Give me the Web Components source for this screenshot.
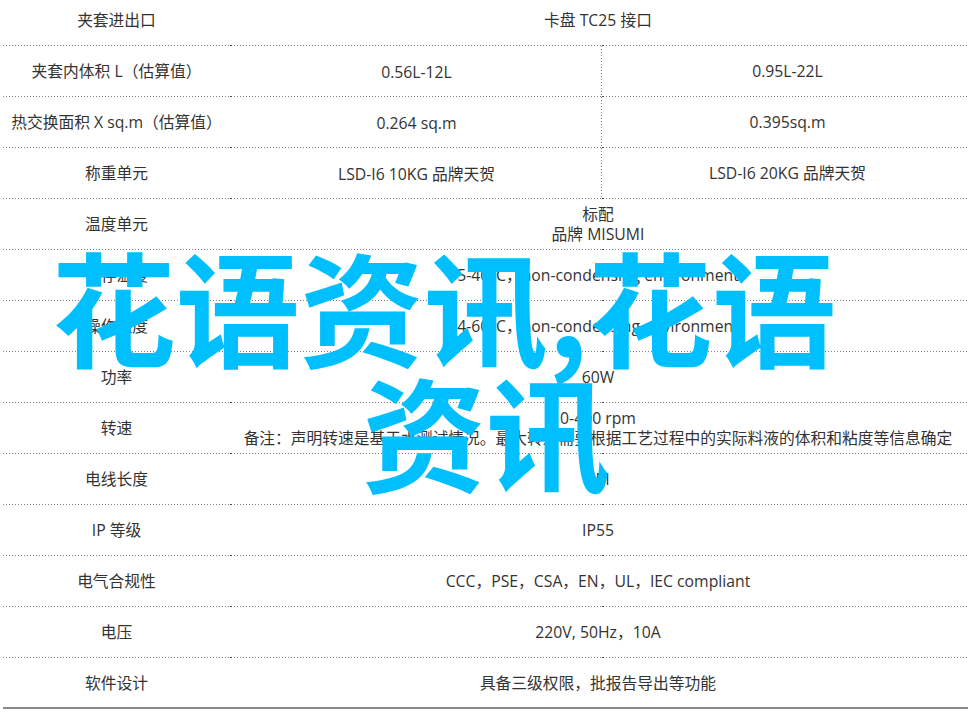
<!DOCTYPE html>
<html lang="zh">
<head>
<meta charset="utf-8">
<title>规格</title>
<style>
html,body{margin:0;padding:0;background:#fff;}
body{width:971px;height:716px;overflow:hidden;font-family:"Open Sans","Noto Sans CJK SC",sans-serif;color:#333;}
</style>
</head>
<body>
<spec-page>
  <spec-row first><span>夹套进出口</span><span slot="wide">卡盘 TC25 接口</span></spec-row>
  <spec-row split><span>夹套内体积 L（估算值）</span><span slot="a">0.56L-12L</span><span slot="b">0.95L-22L</span></spec-row>
  <spec-row split><span>热交换面积 X sq.m（估算值）</span><span slot="a">0.264 sq.m</span><span slot="b">0.395sq.m</span></spec-row>
  <spec-row split><span>称重单元</span><span slot="a">LSD-I6 10KG 品牌天贺</span><span slot="b">LSD-I6 20KG 品牌天贺</span></spec-row>
  <spec-row><span>温度单元</span><span slot="wide">标配<br>品牌 MISUMI</span></spec-row>
  <spec-row><span>储存温度</span><span slot="wide">5-40°C，non-condensing environment</span></spec-row>
  <spec-row><span>操作温度</span><span slot="wide">4-60°C，non-condensing environment</span></spec-row>
  <spec-row><span>功率</span><span slot="wide">60W</span></spec-row>
  <spec-row><span>转速</span><span slot="wide">0-400 rpm<br>备注：声明转速是基于水测试情况。最大转速需要根据工艺过程中的实际料液的体积和粘度等信息确定</span></spec-row>
  <spec-row><span>电线长度</span><span slot="wide">1M</span></spec-row>
  <spec-row><span>IP 等级</span><span slot="wide">IP55</span></spec-row>
  <spec-row><span>电气合规性</span><span slot="wide">CCC，PSE，CSA，EN，UL，IEC compliant</span></spec-row>
  <spec-row><span>电压</span><span slot="wide">220V, 50Hz，10A</span></spec-row>
  <spec-row last><span>软件设计</span><span slot="wide">具备三级权限，批报告导出等功能</span></spec-row>
  <title-overlay slot="overlay">花语资讯,花语资讯</title-overlay>
</spec-page>
<script>
class SpecPage extends HTMLElement{
  constructor(){super();
    this.attachShadow({mode:'open'}).innerHTML=`<style>
      :host{display:block;position:relative;width:971px;height:716px;overflow:hidden;box-sizing:border-box;padding:0 3px;}
      .rows{display:flex;flex-direction:column;margin-top:-5px;}
    </style><div class="rows"><slot></slot></div><slot name="overlay"></slot>`;
  }
}
class SpecRow extends HTMLElement{
  constructor(){super();
    this.attachShadow({mode:'open'}).innerHTML=`<style>
      :host{display:grid;grid-template-columns:227px 372px 366px;height:51px;box-sizing:border-box;padding:0 0 1px;font-size:15.75px;line-height:20px;text-align:center;
        background:
          linear-gradient(#444,#444) 227px 100%/2px 1px no-repeat,
          linear-gradient(#444,#444) 599px 100%/2px 1px no-repeat,
          repeating-linear-gradient(90deg,#808080 0 1px,transparent 1px 3px) 0 100%/100% 1px no-repeat;}
      :host([last]){background:linear-gradient(#8a8a8a,#8a8a8a) 0 100%/100% 2px no-repeat;}
      .c{display:flex;align-items:center;justify-content:center;min-width:0;white-space:nowrap;}
      .wide{grid-column:2 / 4;padding-right:2px;}
      .a,.b{display:none;}
      :host([split]) .wide{display:none;}
      :host([split]) .a,:host([split]) .b{display:flex;}
      :host([split]) .a{margin-bottom:-1px;padding-left:1px;background:repeating-linear-gradient(180deg,#808080 0 1px,transparent 1px 3px) 100% 0/1px 100% no-repeat;}
      :host([split]) .b{padding-left:5px;}
    </style>
    <div class="c"><slot></slot></div>
    <div class="c wide"><div><slot name="wide"></slot></div></div>
    <div class="c a"><slot name="a"></slot></div>
    <div class="c b"><slot name="b"></slot></div>`;
  }
}
class TitleOverlay extends HTMLElement{
  constructor(){super();
    this.attachShadow({mode:'open'}).innerHTML=`<style>
      :host{display:block;position:absolute;left:86px;width:800px;top:242px;text-align:center;text-indent:-84px;color:#00bfff;font:700 124px/125px "Noto Sans CJK SC","Open Sans",sans-serif;}
    </style><slot></slot>`;
  }
}
customElements.define('spec-page',SpecPage);
customElements.define('spec-row',SpecRow);
customElements.define('title-overlay',TitleOverlay);
</script>
</body>
</html>
